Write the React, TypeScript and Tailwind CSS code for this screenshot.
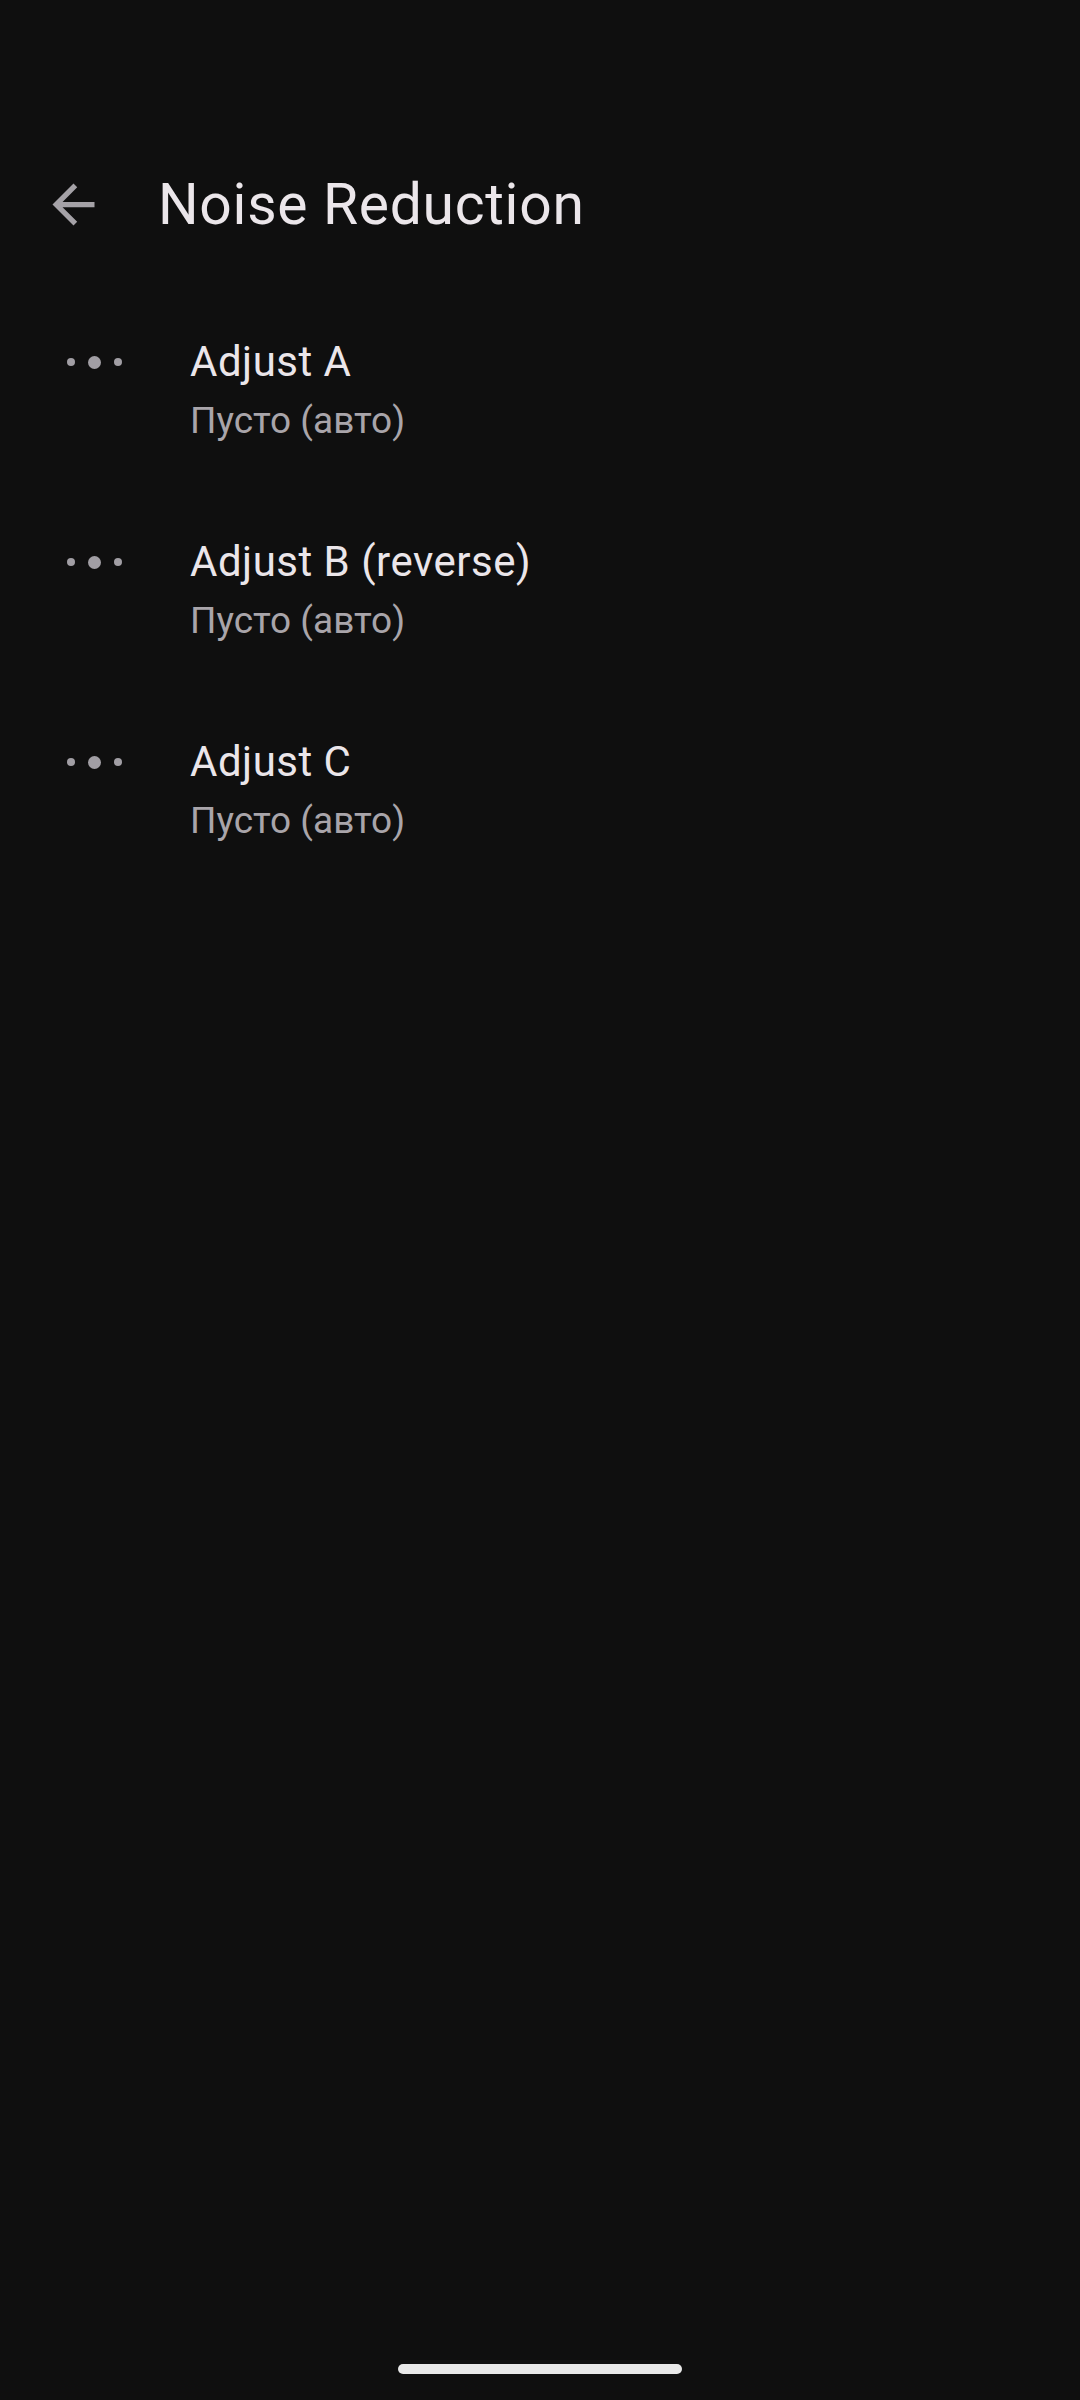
import React from "react";

interface PrefItem {
  title: string;
  summary: string;
}

const items: PrefItem[] = [
  { title: "Adjust A", summary: "Пусто (авто)" },
  { title: "Adjust B (reverse)", summary: "Пусто (авто)" },
  { title: "Adjust C", summary: "Пусто (авто)" },
];

function BackArrow() {
  return (
    <svg
      viewBox="0 0 24 24"
      className="h-[63px] w-[63px]"
      fill="#a5a2a7"
      aria-hidden="true"
    >
      <path d="M20 11H7.83l5.59-5.59L12 4l-8 8 8 8 1.41-1.41L7.83 13H20v-2z" />
    </svg>
  );
}

function DragDots() {
  return (
    <div className="flex h-[56px] items-center gap-[13px]">
      <span className="h-[8px] w-[8px] rounded-full bg-[#a19ea4]" />
      <span className="h-[13px] w-[13px] rounded-full bg-[#a19ea4]" />
      <span className="h-[8px] w-[8px] rounded-full bg-[#a19ea4]" />
    </div>
  );
}

export default function App() {
  return (
    <div
      className="flex h-[2400px] w-[1080px] flex-col bg-[#0f0f0f]"
      style={{ fontFamily: "Roboto, 'Noto Sans', sans-serif" }}
    >
      {/* top app bar */}
      <header className="mt-[148px] flex h-[112px] items-center">
        <button className="ml-[42px] flex items-center">
          <BackArrow />
        </button>
        <h1 className="ml-[53px] text-[57px] leading-none font-normal tracking-[0.7px] text-[#ebe6ea]">
          Noise Reduction
        </h1>
      </header>

      <ul className="pt-[30px]">
        {items.map((item) => (
          <li key={item.title} className="flex py-[44px]">
            <div className="w-[190px] pl-[67px]">
              <DragDots />
            </div>
            <div className="flex flex-col">
              <span className="text-[42px] leading-[56px] tracking-[0.5px] text-[#ebe6ea]">
                {item.title}
              </span>
              <span className="mt-[6px] text-[37px] leading-[50px] text-[#a9a5aa]">
                {item.summary}
              </span>
            </div>
          </li>
        ))}
      </ul>

      <div className="mt-auto mb-[26px] flex justify-center">
        <div className="h-[10px] w-[284px] rounded-full bg-[#e8e8e8]" />
      </div>
    </div>
  );
}
